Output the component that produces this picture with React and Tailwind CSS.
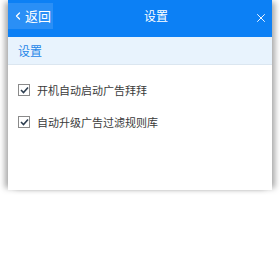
import { X, ChevronLeft } from "lucide-react";

function CheckRow({ label }) {
    return (
        <div className="flex items-center h-[20px]">
            <span className="w-[12px] h-[12px] border border-[#8a8a8a] bg-white flex items-center justify-center">
                <svg width="9" height="8" viewBox="0 0 9 8">
                    <path d="M1 4l2.5 2.5L8 1.5" fill="none" stroke="#2d3e50" strokeWidth="1.6" />
                </svg>
            </span>
            <span className="ml-[7px] text-[11px] text-[#3a3a3a]">{label}</span>
        </div>
    );
}

export default function App() {
    return (
        <div className="w-[280px] h-[270px] bg-white overflow-hidden" style={{ fontFamily: '"Noto Sans CJK SC", "Noto Sans", sans-serif' }}>
            <div className="mx-[8px] h-[190px] bg-white flex flex-col shadow-[-5px_0_6px_-2px_rgba(0,0,0,0.35),5px_0_6px_-2px_rgba(0,0,0,0.35)]">
                <div className="h-[37px] bg-[#0c80f5] flex items-start relative">
                    <div className="mt-[3px] w-[45px] h-[26px] bg-[#2a8ff6] flex items-center pl-[4px] text-white text-[13px]">
                        <ChevronLeft size={12} strokeWidth={2.5} />
                        <span className="ml-[1px]">返回</span>
                    </div>
                    <div className="absolute left-[136px] top-[7px] text-white text-[12px]">设置</div>
                    <X className="absolute right-[4px] top-[11px] text-white" size={14} strokeWidth={1.6} />
                </div>
                <div className="h-[28px] bg-[#e8f3fd] border-b border-[#dbe6f0] flex items-center pl-[10px] text-[12px] text-[#1f86e8]">
                    设置
                </div>
                <div className="pt-[15px] pl-[10px] flex flex-col gap-[12px]">
                    <CheckRow label="开机自动启动广告拜拜" />
                    <CheckRow label="自动升级广告过滤规则库" />
                </div>
            </div>
        </div>
    );
}
